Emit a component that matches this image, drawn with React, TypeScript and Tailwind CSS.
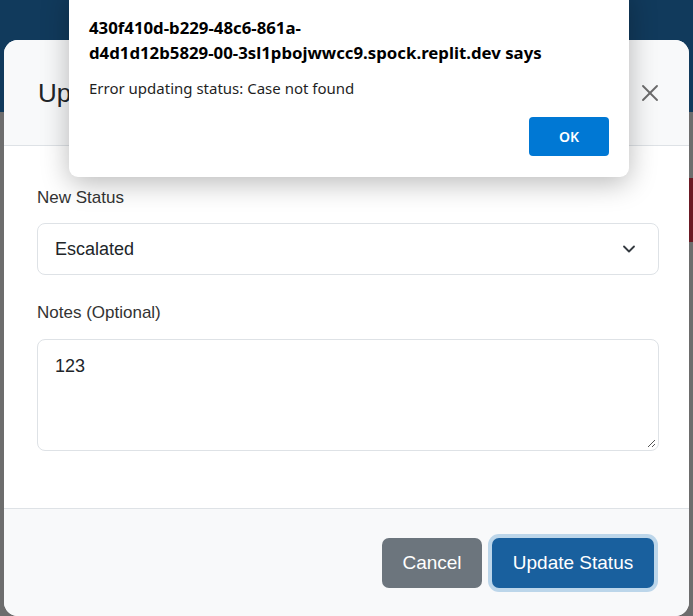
import { ChevronDown, X } from "lucide-react";

const modalFont = { fontFamily: '"Source Sans Pro", "Liberation Sans", Arial, sans-serif' };

function NativeAlert() {
  return (
    <div
      className="absolute left-[69px] top-[-10px] z-20 w-[560px] rounded-b-[9px] bg-white px-[20px] pb-[21px] pt-[25px] shadow-[0_6px_28px_rgba(0,0,0,0.28)]"
      style={{ fontFamily: '"Segoe UI", "Noto Sans", "Liberation Sans", sans-serif' }}
    >
      <p className="text-[16.8px] font-bold leading-[25px] text-black">
        430f410d-b229-48c6-861a-
        <br />
        d4d1d12b5829-00-3sl1pbojwwcc9.spock.replit.dev says
      </p>
      <p className="mt-[12px] text-[15px] leading-[22px] text-[#1f1f1f]">
        Error updating status: Case not found
      </p>
      <div className="mt-[18px] flex justify-end">
        <button
          type="button"
          className="h-[39px] w-[80px] rounded-[4px] bg-[#0078d4] text-[14px] font-semibold text-white"
        >
          OK
        </button>
      </div>
    </div>
  );
}

export default function App() {
  return (
    <div className="relative h-[616px] w-[693px] overflow-hidden bg-[#6d6d6d]">
      {/* dimmed page behind the modal */}
      <div className="h-[112px] bg-[#113a5c]" />
      <div className="absolute right-0 top-[178px] h-[64px] w-[6px] bg-[#6b1a24]" />

      <div
        className="absolute left-[4px] top-[40px] flex h-[576px] w-[685px] flex-col overflow-hidden rounded-[14px] bg-white"
        style={modalFont}
      >
        <div className="flex h-[106px] shrink-0 items-center justify-between border-b border-[#dee2e6] bg-[#f8f9fa] pl-[34px] pr-[25px]">
          <h2 className="text-[26px] font-medium leading-[30px] text-[#212529]">Update Status</h2>
          <X className="h-[28px] w-[28px] text-[#6c6c6c]" strokeWidth={1.6} />
        </div>

        <div className="h-[362px] shrink-0 pl-[33px] pr-[30px] pt-[40px]">
          <label className="block text-[17px] leading-[24px] text-[#333]">New Status</label>
          <div className="mt-[13px] flex h-[52px] items-center justify-between rounded-[8px] border border-[#dee2e6] pl-[17px] pr-[19px]">
            <span className="text-[18px] text-[#212529]">Escalated</span>
            <ChevronDown className="h-[20px] w-[20px] text-[#343a40]" strokeWidth={2.2} />
          </div>

          <label className="mt-[26px] block text-[17px] leading-[24px] text-[#333]">Notes (Optional)</label>
          <div className="relative mt-[14px] h-[112px] rounded-[8px] border border-[#dee2e6] px-[17px] pt-[14px]">
            <span className="text-[18px] leading-[24px] text-[#212529]">123</span>
            <svg
              className="absolute bottom-[2px] right-[2px]"
              width="9"
              height="9"
              viewBox="0 0 9 9"
              fill="none"
              stroke="#555"
              strokeWidth="1"
            >
              <path d="M8 1 L1 8 M8 5 L5 8" />
            </svg>
          </div>
        </div>

        <div className="flex flex-1 items-start justify-end gap-[10px] border-t border-[#dee2e6] bg-[#f8f9fa] pr-[35px] pt-[29px]">
          <button
            type="button"
            className="h-[50px] w-[100px] rounded-[7px] bg-[#6c757d] text-[19px] text-white"
          >
            Cancel
          </button>
          <button
            type="button"
            className="h-[50px] w-[162px] rounded-[7px] bg-[#19609e] text-[19px] text-white ring-[4px] ring-[#bcd6ea]"
          >
            Update Status
          </button>
        </div>
      </div>

      <NativeAlert />
    </div>
  );
}
